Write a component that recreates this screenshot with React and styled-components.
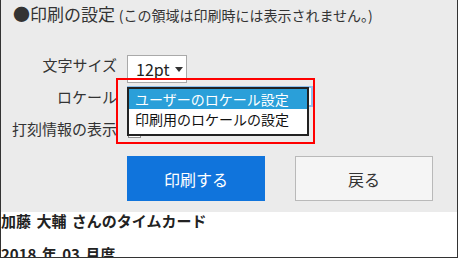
import React from "react";
import styled, { createGlobalStyle } from "styled-components";

const GlobalStyle = createGlobalStyle`
  html, body { margin: 0; padding: 0; background: #fff; }
  body {
    font-family: "Noto Sans CJK JP", "Noto Sans", sans-serif;
    color: #333;
  }
`;

const Frame = styled.div`
  position: relative;
  width: 458px;
  height: 258px;
  box-sizing: border-box;
  border: 1px solid #333;
  border-top: none;
  overflow: hidden;
  background: #fff;
`;

const Panel = styled.section`
  background: #ebebeb;
  height: 212px;
  box-sizing: border-box;
  padding-top: 2px;
`;

const Title = styled.h1`
  margin: 0;
  padding-left: 12px;
  font-size: 17px;
  font-weight: normal;
  line-height: 24px;
  color: #333;
  white-space: nowrap;
`;

const Note = styled.span`
  font-size: 14px;
`;

const Row = styled.div`
  display: flex;
  align-items: flex-start;
  gap: 10px;
  margin-top: ${(p) => p.$top}px;
`;

const Label = styled.div`
  width: 116px;
  text-align: right;
  font-size: 15px;
  line-height: 20px;
  white-space: nowrap;
  margin-top: ${(p) => p.$offset || 0}px;
`;

const SizeSelect = styled.div`
  width: 60px;
  height: 28px;
  box-sizing: border-box;
  border: 1px solid #a9a9a9;
  background: #fff;
  display: flex;
  align-items: center;
  gap: 6px;
  padding-left: 8px;
  font-size: 16px;
  color: #222;
`;

const Caret = styled.span`
  width: 0;
  height: 0;
  border-left: 4.5px solid transparent;
  border-right: 4.5px solid transparent;
  border-top: 5px solid #333;
  margin-top: 1px;
`;

const LocaleSelect = styled.div`
  width: 186px;
  height: 21px;
  box-sizing: border-box;
  border: 2px solid #8fc1ee;
  background: #fff;
`;

const Checkbox = styled.span`
  display: block;
  width: 13px;
  height: 13px;
  box-sizing: border-box;
  border: 1px solid #8f8f8f;
  background: #fff;
  margin-top: ${(p) => p.$offset}px;
  margin-left: 1px;
`;

const Buttons = styled.div`
  display: flex;
  gap: 30px;
  padding-left: 126px;
  margin-top: 17px;
`;

const Button = styled.button`
  width: 138px;
  height: 45px;
  box-sizing: border-box;
  font-family: inherit;
  font-size: 16px;
  padding: 0;
  cursor: pointer;
  border: 1px solid ${(p) => (p.$primary ? "#1074dc" : "#b9b9b9")};
  background: ${(p) => (p.$primary ? "#1074dc" : "#f5f5f5")};
  color: ${(p) => (p.$primary ? "#fff" : "#333")};
`;

const Heading = styled.h2`
  margin: ${(p) => p.$top}px 0 0 0;
  font-size: 15px;
  font-weight: bold;
  line-height: 18px;
  word-spacing: 2px;
  color: #222;
  white-space: nowrap;
`;

const Popup = styled.ul`
  position: absolute;
  left: 126px;
  top: 87px;
  width: 182px;
  height: 49px;
  box-sizing: border-box;
  margin: 0;
  padding: 0;
  list-style: none;
  border: 2px solid #222;
  background: #fff;
`;

const Option = styled.li`
  height: 20px;
  line-height: 20px;
  padding-left: 6px;
  font-size: 14px;
  white-space: nowrap;
  background: ${(p) => (p.$selected ? "#2a9fd9" : "transparent")};
  color: ${(p) => (p.$selected ? "#fff" : "#111")};
`;

const Highlight = styled.div`
  position: absolute;
  left: 115px;
  top: 78px;
  width: 199px;
  height: 66px;
  box-sizing: border-box;
  border: 2px solid #ff0000;
  pointer-events: none;
`;

export default function App() {
  return (
    <>
      <GlobalStyle />
      <Frame>
        <Panel>
          <Title>
            ●印刷の設定 <Note>(この領域は印刷時には表示されません。)</Note>
          </Title>
          <Row $top={28}>
            <Label>文字サイズ</Label>
            <SizeSelect>
              12pt
              <Caret />
            </SizeSelect>
          </Row>
          <Row $top={3}>
            <Label $offset={1}>ロケール</Label>
            <LocaleSelect />
          </Row>
          <Row $top={12}>
            <Label>打刻情報の表示</Label>
            <Checkbox $offset={6} />
          </Row>
          <Buttons>
            <Button $primary>印刷する</Button>
            <Button>戻る</Button>
          </Buttons>
        </Panel>
        <Heading $top={0}>加藤 大輔 さんのタイムカード</Heading>
        <Heading $top={15}>2018 年 03 月度</Heading>
        <Popup>
          <Option $selected>ユーザーのロケール設定</Option>
          <Option>印刷用のロケールの設定</Option>
        </Popup>
        <Highlight />
      </Frame>
    </>
  );
}
